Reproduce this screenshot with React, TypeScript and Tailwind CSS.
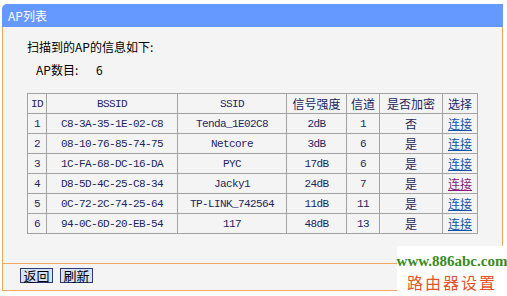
import React from "react"

type Row = {
  id: number
  bssid: string
  ssid: string
  signal: string
  channel: number
  secure: string
  visited?: boolean
}

const rows: Row[] = [
  { id: 1, bssid: "C8-3A-35-1E-02-C8", ssid: "Tenda_1E02C8", signal: "2", channel: 1, secure: "否" },
  { id: 2, bssid: "08-10-76-85-74-75", ssid: "Netcore", signal: "3", channel: 6, secure: "是" },
  { id: 3, bssid: "1C-FA-68-DC-16-DA", ssid: "PYC", signal: "17", channel: 6, secure: "是" },
  { id: 4, bssid: "D8-5D-4C-25-C8-34", ssid: "Jacky1", signal: "24", channel: 7, secure: "是", visited: true },
  { id: 5, bssid: "0C-72-2C-74-25-64", ssid: "TP-LINK_742564", signal: "11", channel: 11, secure: "是" },
  { id: 6, bssid: "94-0C-6D-20-EB-54", ssid: "117", signal: "48", channel: 13, secure: "是" },
]

const cjk = "font-['Noto_Sans_CJK_SC',sans-serif]"
const mono = "font-['Liberation_Mono','Noto_Sans_CJK_SC',monospace] text-[11px] tracking-[-0.6px]"
const cell = "border border-[#a3a3a3] h-[20px] p-0 text-center align-middle leading-[18px]"

const App = () => {
  return (
    <div className={`relative w-[507px] h-[296px] bg-white overflow-hidden ${cjk}`}>
      <div className="ml-[2px] pt-[4px] w-[501px]">
        {/* Title bar */}
        <div className="h-[23px] bg-[#6699ff] rounded-tl-[5px] pl-[6px] flex items-center text-white text-[12px] leading-none">
          AP列表
        </div>

        {/* Body */}
        <div className="h-[237px] bg-[#f4f4f4] border-l border-r border-b border-[#f0a860] pl-[24px] pt-[12px] text-[12px] text-black">
          <div className="leading-[16px]">扫描到的AP的信息如下:</div>
          <div className="leading-[16px] mt-[7px] pl-[9px] flex">
            <span className="w-[60px]">AP数目:</span>
            <span>6</span>
          </div>

          <table className="mt-[15px] border-collapse border border-[#9a9a9a] table-fixed w-[450px] text-[#1c2660]">
            <colgroup>
              <col className="w-[19px]" />
              <col className="w-[131px]" />
              <col className="w-[109px]" />
              <col className="w-[60px]" />
              <col className="w-[33px]" />
              <col className="w-[63px]" />
              <col className="w-[35px]" />
            </colgroup>
            <thead>
              <tr>
                <th className={`${cell} ${mono} font-normal`}>ID</th>
                <th className={`${cell} ${mono} font-normal`}>BSSID</th>
                <th className={`${cell} ${mono} font-normal`}>SSID</th>
                <th className={`${cell} text-[12px] font-normal`}>信号强度</th>
                <th className={`${cell} text-[12px] font-normal`}>信道</th>
                <th className={`${cell} text-[12px] font-normal`}>是否加密</th>
                <th className={`${cell} text-[12px] font-normal`}>选择</th>
              </tr>
            </thead>
            <tbody>
              {rows.map((r) => (
                <tr key={r.id}>
                  <td className={`${cell} ${mono}`}>{r.id}</td>
                  <td className={`${cell} ${mono}`}>{r.bssid}</td>
                  <td className={`${cell} ${mono}`}>{r.ssid}</td>
                  <td className={`${cell} ${mono}`}>{r.signal}dB</td>
                  <td className={`${cell} ${mono}`}>{r.channel}</td>
                  <td className={`${cell} text-[12px]`}>{r.secure}</td>
                  <td className={`${cell} text-[12px]`}>
                    <a className={`underline ${r.visited ? "text-[#8a1a7a]" : "text-[#1155aa]"}`}>连接</a>
                  </td>
                </tr>
              ))}
            </tbody>
          </table>
        </div>

        {/* Footer */}
        <div className="h-[27px] bg-[#f4f4f4] border-l border-b border-[#f0a860] pl-[17px] pt-[4px] flex gap-[7px]">
          <button className="w-[33px] h-[15px] bg-[#d6e2f8] border border-[#2c3c78] text-[13px] leading-[13px] text-black">
            返回
          </button>
          <button className="w-[33px] h-[15px] bg-[#d6e2f8] border border-[#2c3c78] text-[13px] leading-[13px] text-black">
            刷新
          </button>
        </div>
      </div>

      {/* Watermark */}
      <div className="absolute left-[397px] top-[246px] w-[110px] h-[50px] bg-white flex flex-col items-center">
        <div className="mt-[6px] font-['Liberation_Serif',serif] font-bold text-[15px] leading-[18px] text-[#3a8a22]">
          www.886abc.com
        </div>
        <div className="mt-[2px] text-[16px] leading-[20px] tracking-[2px] text-[#e5532a]">路由器设置</div>
      </div>
    </div>
  )
}

export default App
